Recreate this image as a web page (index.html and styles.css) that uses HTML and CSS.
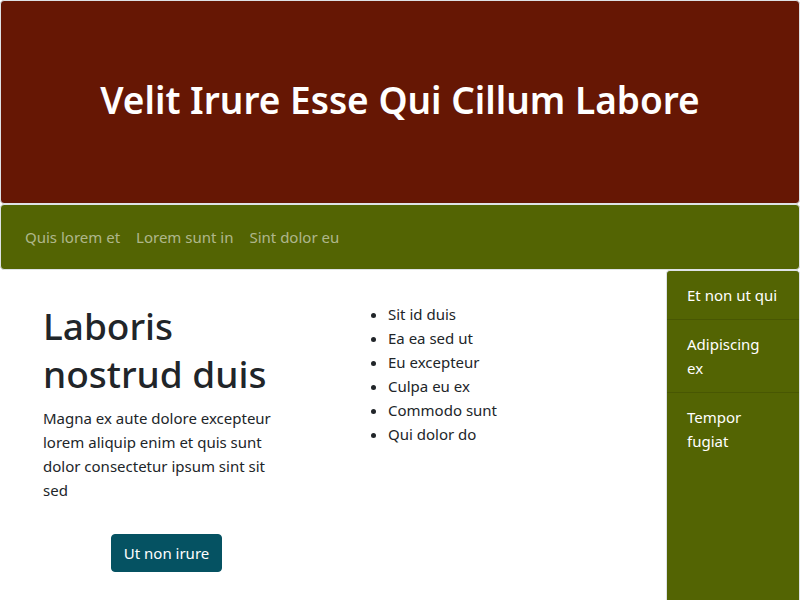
FILE: index.html
```html
<!DOCTYPE html>
<html lang="en">
<head>
<meta charset="utf-8">
<title>Page</title>
<link rel="stylesheet" href="styles.css">
</head>
<body>
<header class="hero">
  <h1 class="hero-title">Velit Irure Esse Qui Cillum Labore</h1>
</header>
<nav class="topnav">
  <a class="nav-link" href="#">Quis lorem et</a>
  <a class="nav-link" href="#">Lorem sunt in</a>
  <a class="nav-link" href="#">Sint dolor eu</a>
</nav>
<div class="layout">
  <main class="content">
    <section class="intro">
      <h2 class="intro-title">Laboris nostrud duis</h2>
      <p class="intro-text">Magna ex aute dolore excepteur lorem aliquip enim et quis sunt dolor consectetur ipsum sint sit sed</p>
      <div class="intro-action">
        <button class="btn" type="button">Ut non irure</button>
      </div>
    </section>
    <section class="list-col">
      <ul class="bullets">
        <li>Sit id duis</li>
        <li>Ea ea sed ut</li>
        <li>Eu excepteur</li>
        <li>Culpa eu ex</li>
        <li>Commodo sunt</li>
        <li>Qui dolor do</li>
      </ul>
    </section>
  </main>
  <aside class="sidebar">
    <div class="side-item">Et non ut qui</div>
    <div class="side-item">Adipiscing ex</div>
    <div class="side-item">Tempor fugiat</div>
  </aside>
</div>
</body>
</html>
```

FILE: styles.css
```css
* { box-sizing: border-box; }
html, body { height: 100%; }
body {
  margin: 0;
  font-family: "Segoe UI", "Noto Sans", "Liberation Sans", sans-serif;
  font-size: 15px;
  line-height: 24px;
  color: #212529;
  background: #fff;
  display: flex;
  flex-direction: column;
  overflow: hidden;
}
.hero {
  height: 204px;
  background: #661704;
  border: 1px solid #dee2e6;
  border-radius: 4px;
  display: flex;
  align-items: center;
  justify-content: center;
  flex-shrink: 0;
}
.hero-title {
  margin: 0 0 4px;
  color: #fff;
  font-size: 37px;
  font-weight: 600;
  line-height: 48px;
}
.topnav {
  height: 66px;
  background: #536403;
  border: 1px solid #dee2e6;
  border-radius: 4px;
  display: flex;
  align-items: center;
  padding: 0 16px;
  flex-shrink: 0;
}
.nav-link {
  color: rgba(255, 255, 255, 0.55);
  text-decoration: none;
  padding: 0 8px;
}
.layout {
  flex: 1;
  display: flex;
  min-height: 0;
}
.content {
  flex: 1;
  display: flex;
  padding: 32px 0 0 43px;
  gap: 66px;
}
.intro {
  width: 247px;
}
.intro-title {
  margin: 0 0 8px;
  font-size: 37px;
  font-weight: 500;
  line-height: 48px;
}
.intro-text {
  margin: 0 0 32px;
}
.intro-action {
  text-align: center;
}
.btn {
  font: inherit;
  color: #fff;
  background: #055262;
  border: 1px solid #055262;
  border-radius: 4px;
  padding: 6px 12px;
  line-height: 24px;
}
.list-col {
  flex: 1;
}
.bullets {
  margin: 0;
  padding-left: 32px;
}
.sidebar {
  width: 134px;
  background: #536403;
  border: 1px solid #dee2e6;
  border-bottom: 0;
  border-radius: 4px 4px 0 0;
  color: #fff;
}
.side-item {
  padding: 12px 21px 12px 20px;
  border-bottom: 1px solid rgba(0, 0, 0, 0.125);
}
.side-item:last-child { border-bottom: 0; }
```
